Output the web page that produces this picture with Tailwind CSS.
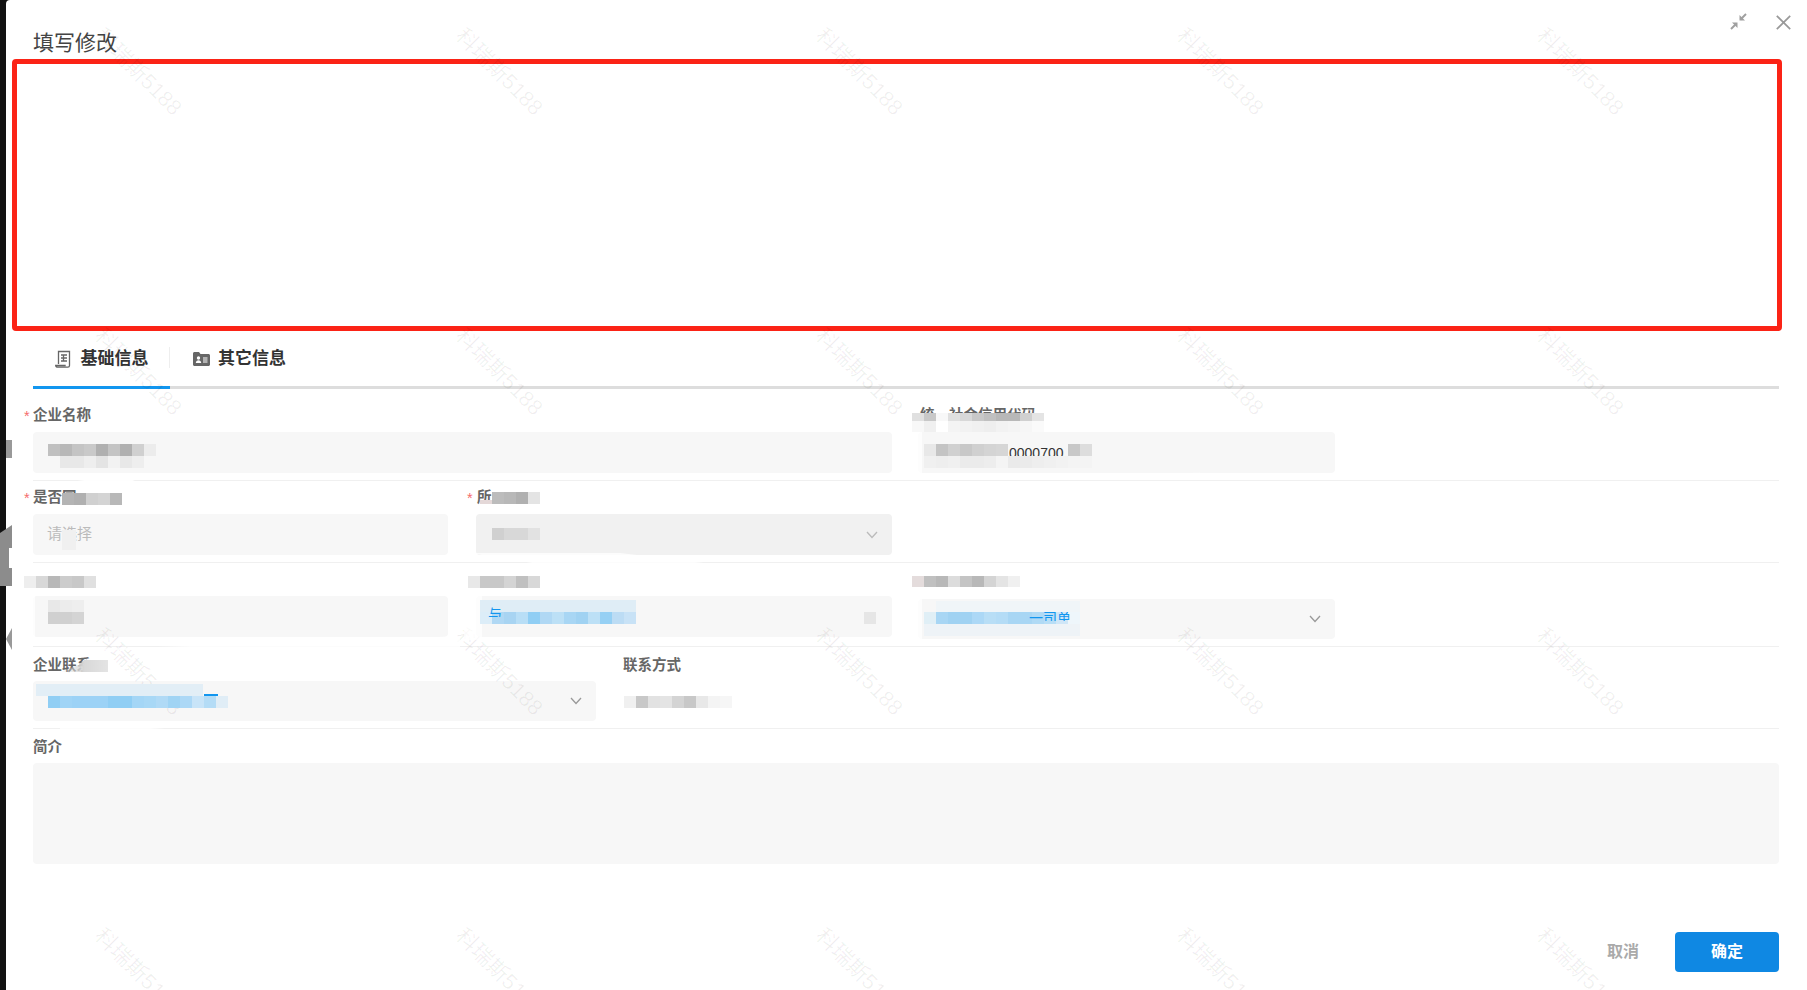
<!DOCTYPE html>
<html lang="zh">
<head>
<meta charset="utf-8">
<title>填写修改</title>
<script src="https://cdn.jsdelivr.net/npm/@tailwindcss/browser@4"></script>
</head>
<body class="m-0 bg-[#111111]">
<div class="relative flex h-[990px] w-[1807px] overflow-hidden font-['Liberation_Sans','Noto_Sans_CJK_SC',sans-serif] text-[14.500px]">
  <div class="w-[6px] shrink-0 bg-[#111111]"></div>

  <main class="flex min-w-0 flex-1 flex-col rounded-tl-[4px] bg-white pl-[27px] pr-[28px]">
    <header class="flex h-[59px] shrink-0 items-start justify-between pt-[30px]">
      <h1 class="text-[21px] font-normal leading-[26px] text-[#444444]">填写修改</h1>
    </header>

    <div class="-ml-[21px] -mr-[3px] h-[272px] shrink-0 rounded-[4px] border-[5px] border-[#fb2316]"></div>

    <nav class="flex h-[58px] shrink-0 border-b-[3px] border-[#dddddd]">
      <div class="relative -mb-[3px] flex h-[58px] w-[137px] items-center justify-center gap-[10px] border-b-[3px] border-[#1296ef]">
        <svg width="16" height="18" viewBox="0 0 16 18" fill="none" stroke="#666666" stroke-width="1.300"><path d="M3.500 14V1.500h11V15.500c0 1-.6 1.600-1.600 1.600H2.600c-1 0-1.900-.7-1.900-1.600h10"/><path d="M6 5h6M6 8h6M6 11h6M8.500 5v6"/></svg>
        <span class="text-[17px] font-bold text-[#333333]">基础信息</span>
        <span class="absolute right-0 top-[16px] h-[21px] w-px bg-[#eeeeee]"></span>
      </div>
      <div class="flex items-center gap-[8px] pl-[23px]">
        <svg width="17" height="14" viewBox="0 0 17 14"><path d="M0 1.500C0 .7.7 0 1.500 0H6l1.500 2h8c.8 0 1.500.7 1.500 1.500V12.500c0 .8-.7 1.500-1.500 1.500h-14C.7 14 0 13.300 0 12.500z" fill="#666666"/><circle cx="5.500" cy="6" r="1.700" fill="#fff"/><path d="M2.800 11c0-1.700 1.200-2.800 2.700-2.800S8.200 9.300 8.200 11z" fill="#fff"/><path d="M10 6h4.500M10 8h4.500M10 10h4.500" stroke="#fff" stroke-width="1.100"/></svg>
        <span class="text-[17px] font-bold text-[#333333]">其它信息</span>
      </div>
    </nav>

    <!-- row 1 -->
    <section class="flex h-[92px] shrink-0 gap-[26px] border-b border-[#f0f0f0] pt-[17px]">
      <div class="w-[859px]">
        <label class="relative block h-[20px] font-bold leading-[18px] text-[#666666]"><span class="absolute -left-[9px] top-[1px] font-normal text-[#f56c6c]">*</span>企业名称</label>
        <div class="mt-[6px] h-[41px] rounded-[4px] bg-[#f7f7f7]"></div>
      </div>
      <div class="w-[417px]">
        <label class="block h-[20px] pl-[2px] font-bold leading-[18px] text-[#666666]">统一社会信用代码</label>
        <div class="mt-[6px] flex h-[41px] items-start overflow-hidden rounded-[4px] bg-[#f7f7f7] pl-[91px] pt-[11px] text-[14px] leading-[20px] text-[#333333]">0000700</div>
      </div>
    </section>

    <!-- row 2 -->
    <section class="flex h-[82px] shrink-0 gap-[28px] border-b border-[#f0f0f0] pt-[7px]">
      <div class="w-[415px]">
        <label class="relative block h-[20px] font-bold leading-[18px] text-[#666666]"><span class="absolute -left-[9px] top-[1px] font-normal text-[#f56c6c]">*</span>是否同</label>
        <div class="mt-[6px] flex h-[41px] items-center rounded-[4px] bg-[#f7f7f7] pl-[14px] text-[15px] text-[#bbbbbb]">请选择</div>
      </div>
      <div class="w-[416px]">
        <label class="relative block h-[20px] pl-[1px] font-bold leading-[18px] text-[#666666]"><span class="absolute -left-[9px] top-[1px] font-normal text-[#f56c6c]">*</span>所</label>
        <div class="mt-[6px] flex h-[41px] items-center justify-end rounded-[4px] bg-[#f1f1f1] pr-[14px]">
          <svg width="12" height="8" viewBox="0 0 12 8" fill="none" stroke="#bbbbbb" stroke-width="1.300"><path d="M1 1l5 5.500L11 1"/></svg>
        </div>
      </div>
    </section>

    <!-- row 3 -->
    <section class="flex h-[84px] shrink-0 border-b border-[#f0f0f0] pt-[7px]">
      <div class="w-[415px]">
        <div class="h-[20px]"></div>
        <div class="mt-[6px] h-[41px] rounded-[4px] bg-[#f7f7f7]"></div>
      </div>
      <div class="ml-[28px] w-[416px]">
        <div class="h-[20px]"></div>
        <div class="mt-[6px] h-[41px] rounded-[4px] bg-[#f7f7f7]"></div>
      </div>
      <div class="ml-[26px] w-[417px]">
        <div class="h-[20px]"></div>
        <div class="mt-[9px] flex h-[40px] items-center justify-end rounded-[4px] bg-[#f7f7f7] pr-[14px]">
          <svg width="12" height="8" viewBox="0 0 12 8" fill="none" stroke="#999999" stroke-width="1.300"><path d="M1 1l5 5.500L11 1"/></svg>
        </div>
      </div>
    </section>

    <!-- row 4 -->
    <section class="flex h-[82px] shrink-0 gap-[27px] border-b border-[#f0f0f0] pt-[9px]">
      <div class="w-[563px]">
        <label class="block h-[20px] font-bold leading-[18px] text-[#666666]">企业联系</label>
        <div class="mt-[5px] flex h-[40px] items-center justify-end rounded-[4px] bg-[#f7f7f7] pr-[14px]">
          <svg width="12" height="8" viewBox="0 0 12 8" fill="none" stroke="#999999" stroke-width="1.300"><path d="M1 1l5 5.500L11 1"/></svg>
        </div>
      </div>
      <div class="w-[300px]">
        <label class="block h-[20px] font-bold leading-[18px] text-[#666666]">联系方式</label>
      </div>
    </section>

    <!-- row 5 -->
    <section class="shrink-0 pt-[9px]">
      <label class="block h-[20px] font-bold leading-[18px] text-[#666666]">简介</label>
      <div class="mt-[5px] h-[101px] rounded-[4px] bg-[#f7f7f7]"></div>
    </section>

    <footer class="mb-[18px] mt-auto flex items-center justify-end">
      <button class="mr-[36px] text-[16px] font-bold text-[#aaaaaa]">取消</button>
      <button class="h-[40px] w-[104px] rounded-[4px] bg-[#0f88e3] text-[16px] font-bold text-white">确定</button>
    </footer>
  </main>

  <!-- window controls -->
  <div class="absolute right-[16px] top-[13px] flex items-start gap-[29px]">
    <svg width="17" height="17" viewBox="0 0 17 17" fill="none" stroke="#a0a0a0" stroke-width="2"><path d="M16 1L10.500 6.500"/><path d="M1 16L6.500 10.500"/><path d="M9.500 2v5.500H15z" fill="#a0a0a0" stroke="none"/><path d="M7.500 15V9.500H2z" fill="#a0a0a0" stroke="none"/></svg>
    <svg class="mt-[2px]" width="15" height="15" viewBox="0 0 15 15" fill="none" stroke="#999999" stroke-width="1.700"><path d="M.8.800l13.400 13.400M14.200.800L.8 14.200"/></svg>
  </div>

  <!-- scraps at the left edge -->
  <div class="absolute left-[6px] top-[440px] h-[18px] w-[6px] bg-[#999999]"></div>
  <div class="absolute left-0 top-[525px] h-[61px] w-[12px] bg-[#8c8c8c] [clip-path:polygon(0_8px,12px_0,12px_23px,9px_23px,9px_43px,12px_43px,12px_61px,0_61px)]"></div>
  <div class="absolute left-[6px] top-[628px] h-[22px] w-[6px] bg-[#999999] [clip-path:polygon(0_50%,100%_0,100%_100%)]"></div>

  <!-- watermark, laid over the page -->
  <div class="pointer-events-none absolute inset-0 grid -translate-x-[42px] -translate-y-[78px] grid-cols-[repeat(5,360.500px)] grid-rows-[repeat(4,300px)] text-[21.500px] text-black/[0.06]">
    <span class="flex rotate-45 items-center justify-center">科瑞斯5188</span><span class="flex rotate-45 items-center justify-center">科瑞斯5188</span><span class="flex rotate-45 items-center justify-center">科瑞斯5188</span><span class="flex rotate-45 items-center justify-center">科瑞斯5188</span><span class="flex rotate-45 items-center justify-center">科瑞斯5188</span>
    <span class="flex rotate-45 items-center justify-center">科瑞斯5188</span><span class="flex rotate-45 items-center justify-center">科瑞斯5188</span><span class="flex rotate-45 items-center justify-center">科瑞斯5188</span><span class="flex rotate-45 items-center justify-center">科瑞斯5188</span><span class="flex rotate-45 items-center justify-center">科瑞斯5188</span>
    <span class="flex rotate-45 items-center justify-center">科瑞斯5188</span><span class="flex rotate-45 items-center justify-center">科瑞斯5188</span><span class="flex rotate-45 items-center justify-center">科瑞斯5188</span><span class="flex rotate-45 items-center justify-center">科瑞斯5188</span><span class="flex rotate-45 items-center justify-center">科瑞斯5188</span>
    <span class="flex rotate-45 items-center justify-center">科瑞斯5188</span><span class="flex rotate-45 items-center justify-center">科瑞斯5188</span><span class="flex rotate-45 items-center justify-center">科瑞斯5188</span><span class="flex rotate-45 items-center justify-center">科瑞斯5188</span><span class="flex rotate-45 items-center justify-center">科瑞斯5188</span>
  </div>

  <!-- white retouching smears -->
  <div class="absolute left-[22px] top-[473px] h-[16px] w-[130px] bg-white/90 [clip-path:polygon(0_100%,70%_100%,100%_0,85%_0)]"></div>
  <div class="absolute left-[900px] top-[468px] h-[12px] w-[300px] bg-white/80 [clip-path:polygon(0_100%,100%_100%,100%_40%)]"></div>
  <div class="absolute left-[470px] top-[553px] h-[12px] w-[250px] bg-white/80 [clip-path:polygon(0_0,60%_0,100%_100%,30%_100%)]"></div>
  <div class="absolute left-[60px] top-[636px] h-[14px] w-[400px] bg-white/80 [clip-path:polygon(0_100%,100%_100%,100%_0,70%_40%)]"></div>
  <div class="absolute left-[60px] top-[722px] h-[20px] w-[180px] bg-white/80 [clip-path:polygon(0_0,100%_60%,100%_100%,0_100%)]"></div>
  <div class="absolute left-[906px] top-[430px] h-[50px] w-[16px] bg-white/70"></div>
  <div class="absolute left-[906px] top-[590px] h-[50px] w-[16px] bg-white/70"></div>
  <div class="absolute left-[464px] top-[590px] h-[50px] w-[18px] bg-white/70"></div>
  <div class="absolute left-[26px] top-[596px] h-[41px] w-[9px] bg-white/70"></div>

  <!-- mosaics over private values -->
  <div class="absolute left-[48px] top-[444px] flex h-[12px]"><i class="w-[12px] bg-[#c0c0c0]"></i><i class="w-[12px] bg-[#b8b8b8]"></i><i class="w-[12px] bg-[#c4c4c4]"></i><i class="w-[12px] bg-[#c9c9c9]"></i><i class="w-[12px] bg-[#b0b0b0]"></i><i class="w-[12px] bg-[#c4c4c4]"></i><i class="w-[12px] bg-[#b0b0b0]"></i><i class="w-[12px] bg-[#d0d0d0]"></i><i class="w-[12px] bg-[#ececec]"></i></div>
  <div class="absolute left-[60px] top-[456px] flex h-[12px]"><i class="w-[12px] bg-[#e8e8e8]"></i><i class="w-[12px] bg-[#e8e8e8]"></i><i class="w-[12px] bg-[#eeeeee]"></i><i class="w-[12px] bg-[#e4e4e4]"></i><i class="w-[12px] bg-[#f2f2f2]"></i><i class="w-[12px] bg-[#e8e8e8]"></i><i class="w-[12px] bg-[#eeeeee]"></i></div>

  <div class="absolute left-[912px] top-[413px] flex h-[8px]"><i class="w-[12px] bg-[#e0e0e0]"></i><i class="w-[12px] bg-[#c8c8c8]"></i><i class="w-[12px] bg-[#f8f8f8]"></i><i class="w-[12px] bg-[#e0e0e0]"></i><i class="w-[12px] bg-[#d8d8d8]"></i><i class="w-[12px] bg-[#c8c8c8]"></i><i class="w-[12px] bg-[#c0c0c0]"></i><i class="w-[12px] bg-[#b8b8b8]"></i><i class="w-[12px] bg-[#b8b8b8]"></i><i class="w-[12px] bg-[#d0d0d0]"></i><i class="w-[12px] bg-[#e4e4e4]"></i></div>
  <div class="absolute left-[912px] top-[421px] flex h-[11px]"><i class="w-[12px] bg-[#f8f8f8]"></i><i class="w-[12px] bg-[#f0f0f0]"></i><i class="w-[12px] bg-white"></i><i class="w-[12px] bg-[#f4f4f4]"></i><i class="w-[12px] bg-[#f2f2f2]"></i><i class="w-[12px] bg-[#f0f0f0]"></i><i class="w-[12px] bg-[#eeeeee]"></i><i class="w-[12px] bg-[#f2f2f2]"></i><i class="w-[12px] bg-[#f4f4f4]"></i><i class="w-[12px] bg-[#f6f6f6]"></i><i class="w-[12px] bg-[#fafafa]"></i></div>
  <div class="absolute left-[924px] top-[444px] flex h-[12px]"><i class="w-[12px] bg-[#e8e8e8]"></i><i class="w-[12px] bg-[#c4c4c4]"></i><i class="w-[12px] bg-[#d0d0d0]"></i><i class="w-[12px] bg-[#c8c8c8]"></i><i class="w-[12px] bg-[#d0d0d0]"></i><i class="w-[12px] bg-[#d4d4d4]"></i><i class="w-[12px] bg-[#d6d6d6]"></i></div>
  <div class="absolute left-[1068px] top-[444px] flex h-[12px]"><i class="w-[12px] bg-[#c8c8c8]"></i><i class="w-[12px] bg-[#dddddd]"></i></div>
  <div class="absolute left-[924px] top-[456px] flex h-[12px]"><i class="w-[12px] bg-[#f0f0f0]"></i><i class="w-[12px] bg-[#eeeeee]"></i><i class="w-[12px] bg-[#f0f0f0]"></i><i class="w-[12px] bg-[#ebebeb]"></i><i class="w-[12px] bg-[#ebebeb]"></i><i class="w-[12px] bg-[#ededed]"></i><i class="w-[12px] bg-[#f4f4f4]"></i><i class="w-[12px] bg-[#eaeaea]"></i><i class="w-[12px] bg-[#ebebeb]"></i><i class="w-[12px] bg-[#eeeeee]"></i><i class="w-[12px] bg-[#f0f0f0]"></i><i class="w-[12px] bg-[#f2f2f2]"></i><i class="w-[12px] bg-[#f4f4f4]"></i><i class="w-[12px] bg-[#f4f4f4]"></i></div>

  <div class="absolute left-[62px] top-[493px] flex h-[12px]"><i class="w-[12px] bg-[#b4b4b4]"></i><i class="w-[12px] bg-[#b0b0b0]"></i><i class="w-[12px] bg-[#d0d0d0]"></i><i class="w-[12px] bg-[#d4d4d4]"></i><i class="w-[12px] bg-[#b8b8b8]"></i></div>
  <div class="absolute left-[62px] top-[530px] h-[20px] w-[14px] bg-[#f0f0f0]"></div>

  <div class="absolute left-[480px] top-[500px] h-[4px] w-[12px] bg-[#e4d8d8]"></div>
  <div class="absolute left-[492px] top-[492px] flex h-[12px]"><i class="w-[12px] bg-[#bcbcbc]"></i><i class="w-[12px] bg-[#b8b8b8]"></i><i class="w-[12px] bg-[#b0b0b0]"></i><i class="w-[12px] bg-[#e4e4e4]"></i></div>
  <div class="absolute left-[492px] top-[528px] flex h-[12px]"><i class="w-[12px] bg-[#d0d0d0]"></i><i class="w-[12px] bg-[#d8d8d8]"></i><i class="w-[12px] bg-[#d8d8d8]"></i><i class="w-[12px] bg-[#e2e2e2]"></i></div>

  <div class="absolute left-[24px] top-[576px] flex h-[12px]"><i class="w-[12px] bg-[#eeeeee]"></i><i class="w-[12px] bg-[#d8d8d8]"></i><i class="w-[12px] bg-[#b8b8b8]"></i><i class="w-[12px] bg-[#cccccc]"></i><i class="w-[12px] bg-[#c8c8c8]"></i><i class="w-[12px] bg-[#e0e0e0]"></i></div>
  <div class="absolute left-[48px] top-[600px] flex h-[12px]"><i class="w-[12px] bg-[#e8e8e8]"></i><i class="w-[12px] bg-[#ececec]"></i><i class="w-[12px] bg-[#eeeeee]"></i></div>
  <div class="absolute left-[48px] top-[612px] flex h-[12px]"><i class="w-[12px] bg-[#d0d0d0]"></i><i class="w-[12px] bg-[#d0d0d0]"></i><i class="w-[12px] bg-[#d4d4d4]"></i></div>

  <div class="absolute left-[468px] top-[576px] flex h-[12px]"><i class="w-[12px] bg-[#e8e8e8]"></i><i class="w-[12px] bg-[#c8c8c8]"></i><i class="w-[12px] bg-[#c8c8c8]"></i><i class="w-[12px] bg-[#d4d4d4]"></i><i class="w-[12px] bg-[#c0c0c0]"></i><i class="w-[12px] bg-[#d8d8d8]"></i></div>
  <div class="absolute left-[480px] top-[600px] h-[12px] w-[156px] bg-[#dfedf6]"></div>
  <div class="absolute left-[480px] top-[612px] flex h-[12px]"><i class="w-[12px] bg-[#dcedf8]"></i><i class="w-[12px] bg-[#b0d8f4]"></i><i class="w-[12px] bg-[#a8d4f2]"></i><i class="w-[12px] bg-[#b8def6]"></i><i class="w-[12px] bg-[#90cef4]"></i><i class="w-[12px] bg-[#b0d8f4]"></i><i class="w-[12px] bg-[#bce0f6]"></i><i class="w-[12px] bg-[#a8d6f4]"></i><i class="w-[12px] bg-[#a0d2f2]"></i><i class="w-[12px] bg-[#bce0f6]"></i><i class="w-[12px] bg-[#96d0f4]"></i><i class="w-[12px] bg-[#bcdcf4]"></i><i class="w-[12px] bg-[#c8e2f6]"></i></div>
  <span class="absolute left-[488px] top-[607px] h-[10px] overflow-hidden text-[14px] leading-[14px] text-[#1296ef]">与</span>

  <div class="absolute left-[864px] top-[612px] h-[12px] w-[12px] bg-[#e6e6e6]"></div>

  <div class="absolute left-[912px] top-[576px] flex h-[11px]"><i class="w-[12px] bg-[#e4dcdc]"></i><i class="w-[12px] bg-[#c0c0c0]"></i><i class="w-[12px] bg-[#b8b8b8]"></i><i class="w-[12px] bg-[#dcdcdc]"></i><i class="w-[12px] bg-[#c4c4c4]"></i><i class="w-[12px] bg-[#b8b8b8]"></i><i class="w-[12px] bg-[#d4d4d4]"></i><i class="w-[12px] bg-[#e4e4e4]"></i><i class="w-[12px] bg-[#f0f0f0]"></i></div>
  <div class="absolute left-[936px] top-[601px] h-[11px] w-[144px] bg-[#f0f5f8]"></div>
  <div class="absolute left-[924px] top-[612px] flex h-[12px]"><i class="w-[12px] bg-[#e0eff6]"></i><i class="w-[12px] bg-[#a8d6f4]"></i><i class="w-[12px] bg-[#a0d2f2]"></i><i class="w-[12px] bg-[#a0d2f2]"></i><i class="w-[12px] bg-[#acd8f6]"></i><i class="w-[12px] bg-[#b8def6]"></i><i class="w-[12px] bg-[#b4dcf6]"></i><i class="w-[12px] bg-[#a8d6f4]"></i><i class="w-[12px] bg-[#a8d6f4]"></i><i class="w-[12px] bg-[#b0daf5]"></i><i class="w-[12px] bg-[#b8def6]"></i><i class="w-[12px] bg-[#cfe6f7]"></i><i class="w-[12px] bg-[#eef6fb]"></i></div>
  <span class="absolute left-[1029px] top-[612px] h-[9px] overflow-hidden text-[14px] leading-[12px] text-[#1296ef]">一司单</span>
  <div class="absolute left-[924px] top-[624px] h-[12px] w-[156px] bg-[#eef3f7]"></div>

  <div class="absolute left-[60px] top-[660px] h-[12px] w-[48px] bg-gradient-to-r from-[#c8c8c8]/0 via-[#d8d8d8] to-[#e4e4e4] [clip-path:polygon(0_100%,40%_40%,50%_0,100%_0,100%_100%)]"></div>
  <div class="absolute left-[36px] top-[684px] h-[12px] w-[167px] bg-[#e2eef6]"></div>
  <div class="absolute left-[48px] top-[696px] flex h-[12px]"><i class="w-[12px] bg-[#90cef4]"></i><i class="w-[12px] bg-[#a0d4f6]"></i><i class="w-[12px] bg-[#9cd2f6]"></i><i class="w-[24px] bg-[#9cd2f6]"></i><i class="w-[24px] bg-[#90cef4]"></i><i class="w-[12px] bg-[#a4d6f6]"></i><i class="w-[12px] bg-[#a8d8f6]"></i><i class="w-[12px] bg-[#b0daf6]"></i><i class="w-[12px] bg-[#a0d4f4]"></i><i class="w-[12px] bg-[#acd8f6]"></i><i class="w-[12px] bg-[#c8e4f8]"></i><i class="w-[12px] bg-[#b4dcf6]"></i><i class="w-[12px] bg-[#e0edf6]"></i></div>
  <div class="absolute left-[204px] top-[694px] h-[1.500px] w-[14px] bg-[#1296ef]"></div>

  <div class="absolute left-[624px] top-[696px] flex h-[12px]"><i class="w-[12px] bg-[#f0f0f0]"></i><i class="w-[12px] bg-[#c8c8c8]"></i><i class="w-[12px] bg-[#e2e2e2]"></i><i class="w-[12px] bg-[#e4e4e4]"></i><i class="w-[12px] bg-[#d4d4d4]"></i><i class="w-[12px] bg-[#c8c8c8]"></i><i class="w-[12px] bg-[#e8e8e8]"></i><i class="w-[12px] bg-[#f4f4f4]"></i><i class="w-[12px] bg-[#f6f6f6]"></i></div>
</div>
</body>
</html>
